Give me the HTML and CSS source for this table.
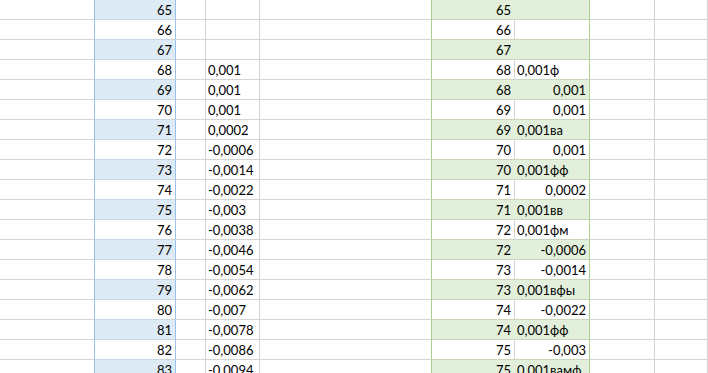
FILE: index.html
```html
<!DOCTYPE html>
<html>
<head>
<meta charset="utf-8">
<link rel="stylesheet" href="styles.css">
</head>
<body>
<div class="sheet">
  <div class="row odd"><div class="c"></div><div class="c b r">65</div><div class="c"></div><div class="c"></div><div class="c e"></div><div class="c f r">65</div><div class="c g"></div><div class="c"></div><div class="c"></div></div>
  <div class="row"><div class="c"></div><div class="c b r">66</div><div class="c"></div><div class="c"></div><div class="c e"></div><div class="c f r">66</div><div class="c g"></div><div class="c"></div><div class="c"></div></div>
  <div class="row odd"><div class="c"></div><div class="c b r">67</div><div class="c"></div><div class="c"></div><div class="c e"></div><div class="c f r">67</div><div class="c g"></div><div class="c"></div><div class="c"></div></div>
  <div class="row"><div class="c"></div><div class="c b r">68</div><div class="c"></div><div class="c">0,001</div><div class="c e"></div><div class="c f r">68</div><div class="c g">0,001ф</div><div class="c"></div><div class="c"></div></div>
  <div class="row odd"><div class="c"></div><div class="c b r">69</div><div class="c"></div><div class="c">0,001</div><div class="c e"></div><div class="c f r">68</div><div class="c g r">0,001</div><div class="c"></div><div class="c"></div></div>
  <div class="row"><div class="c"></div><div class="c b r">70</div><div class="c"></div><div class="c">0,001</div><div class="c e"></div><div class="c f r">69</div><div class="c g r">0,001</div><div class="c"></div><div class="c"></div></div>
  <div class="row odd"><div class="c"></div><div class="c b r">71</div><div class="c"></div><div class="c">0,0002</div><div class="c e"></div><div class="c f r">69</div><div class="c g">0,001ва</div><div class="c"></div><div class="c"></div></div>
  <div class="row"><div class="c"></div><div class="c b r">72</div><div class="c"></div><div class="c">-0,0006</div><div class="c e"></div><div class="c f r">70</div><div class="c g r">0,001</div><div class="c"></div><div class="c"></div></div>
  <div class="row odd"><div class="c"></div><div class="c b r">73</div><div class="c"></div><div class="c">-0,0014</div><div class="c e"></div><div class="c f r">70</div><div class="c g">0,001фф</div><div class="c"></div><div class="c"></div></div>
  <div class="row"><div class="c"></div><div class="c b r">74</div><div class="c"></div><div class="c">-0,0022</div><div class="c e"></div><div class="c f r">71</div><div class="c g r">0,0002</div><div class="c"></div><div class="c"></div></div>
  <div class="row odd"><div class="c"></div><div class="c b r">75</div><div class="c"></div><div class="c">-0,003</div><div class="c e"></div><div class="c f r">71</div><div class="c g">0,001вв</div><div class="c"></div><div class="c"></div></div>
  <div class="row"><div class="c"></div><div class="c b r">76</div><div class="c"></div><div class="c">-0,0038</div><div class="c e"></div><div class="c f r">72</div><div class="c g">0,001фм</div><div class="c"></div><div class="c"></div></div>
  <div class="row odd"><div class="c"></div><div class="c b r">77</div><div class="c"></div><div class="c">-0,0046</div><div class="c e"></div><div class="c f r">72</div><div class="c g r">-0,0006</div><div class="c"></div><div class="c"></div></div>
  <div class="row"><div class="c"></div><div class="c b r">78</div><div class="c"></div><div class="c">-0,0054</div><div class="c e"></div><div class="c f r">73</div><div class="c g r">-0,0014</div><div class="c"></div><div class="c"></div></div>
  <div class="row odd"><div class="c"></div><div class="c b r">79</div><div class="c"></div><div class="c">-0,0062</div><div class="c e"></div><div class="c f r">73</div><div class="c g">0,001вфы</div><div class="c"></div><div class="c"></div></div>
  <div class="row"><div class="c"></div><div class="c b r">80</div><div class="c"></div><div class="c">-0,007</div><div class="c e"></div><div class="c f r">74</div><div class="c g r">-0,0022</div><div class="c"></div><div class="c"></div></div>
  <div class="row odd"><div class="c"></div><div class="c b r">81</div><div class="c"></div><div class="c">-0,0078</div><div class="c e"></div><div class="c f r">74</div><div class="c g">0,001фф</div><div class="c"></div><div class="c"></div></div>
  <div class="row"><div class="c"></div><div class="c b r">82</div><div class="c"></div><div class="c">-0,0086</div><div class="c e"></div><div class="c f r">75</div><div class="c g r">-0,003</div><div class="c"></div><div class="c"></div></div>
  <div class="row odd"><div class="c"></div><div class="c b r">83</div><div class="c"></div><div class="c">-0,0094</div><div class="c e"></div><div class="c f r">75</div><div class="c g">0,001вамф</div><div class="c"></div><div class="c"></div></div>
</div>
</body>
</html>
```

FILE: styles.css
```css
html, body {
  margin: 0;
  padding: 0;
  background: #ffffff;
  overflow: hidden;
}

.sheet {
  width: 708px;
  height: 373px;
  overflow: hidden;
}

.row {
  display: grid;
  grid-template-columns: 95px 81px 30px 54px 172px 83px 75px 65px 1fr;
  height: 20px;
}

.c {
  box-sizing: border-box;
  height: 20px;
  border-right: 1px solid #d4d4d4;
  border-bottom: 1px solid #d4d4d4;
  font-family: Lato, "Liberation Sans", sans-serif;
  font-size: 13px;
  line-height: 19px;
  padding: 1px 2px 0 2px;
  color: #000000;
  white-space: nowrap;
  overflow: hidden;
}

.r {
  text-align: right;
  padding-right: 3px;
}

.row > .c:first-child {
  border-right-color: #9bc2e6;
}

.b {
  border-right-color: #9bc2e6;
  border-bottom-color: #c9d6e4;
}

.odd .b {
  background: #ddebf7;
}

.e {
  border-right-color: #a9d08e;
}

.f, .g {
  border-bottom-color: #c8d6bd;
}

.g {
  border-right-color: #a9d08e;
}

.odd .f,
.odd .g {
  background: #e2efda;
}

.odd .f {
  border-right-color: #e2efda;
}
```
